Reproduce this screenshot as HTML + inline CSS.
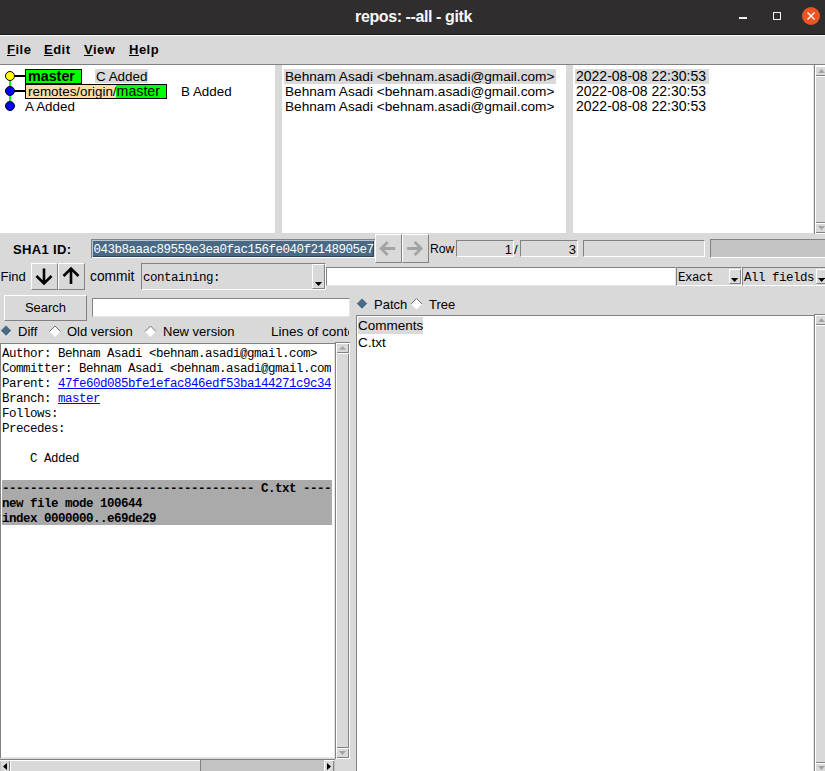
<!DOCTYPE html>
<html><head><meta charset="utf-8">
<style>
*{margin:0;padding:0;box-sizing:border-box}
html,body{width:825px;height:771px;overflow:hidden;background:#d9d9d9;position:relative}
body{font-family:"Liberation Sans",sans-serif;font-size:13px;color:#000}
.a{position:absolute}
.t{position:absolute;white-space:pre;line-height:15px;height:15px}
.m{font-family:"Liberation Mono",monospace;font-size:12.5px;letter-spacing:-0.5px}
.w{background:#fff}
.dk{background:#828282}
.wh{background:#fff}
.raised{position:absolute;background:#d9d9d9;border-top:1px solid #fff;border-left:1px solid #fff;border-bottom:1px solid #828282;border-right:1px solid #828282}
.sunk{position:absolute;border-top:1px solid #828282;border-left:1px solid #828282;border-bottom:1px solid #fff;border-right:1px solid #fff}
.hl{position:absolute;background:#d9d9d9}
.sunk.w{border-bottom-color:#e5e5e5;border-right-color:#e5e5e5}
svg{position:absolute;overflow:visible}
</style></head><body>

<!-- title bar -->
<div class="a" style="left:0;top:0;width:825px;height:34px;background:#2f2d2d"></div>
<div class="a" style="left:0;top:34px;width:825px;height:1px;background:#171515"></div>
<div class="a" style="left:0;top:35px;width:825px;height:1px;background:#fff"></div>
<div class="t" style="left:0;top:7px;width:825px;text-align:center;font-weight:bold;font-size:16px;letter-spacing:-0.4px;color:#f7f7f7;height:19px;line-height:19px;padding-left:2px">repos: --all - gitk</div>
<div class="a" style="left:739px;top:17px;width:8px;height:2px;background:#f2f2f2"></div>
<div class="a" style="left:773px;top:12px;width:8px;height:8px;border:1.5px solid #f2f2f2"></div>
<div class="a" style="left:802px;top:7px;width:18px;height:18px;border-radius:50%;background:#e95420"></div>
<svg style="left:0;top:0" width="825" height="34"><path d="M807.5 12.5 L814.5 19.5 M814.5 12.5 L807.5 19.5" stroke="#fff" stroke-width="1.3"/></svg>

<!-- menubar -->
<div class="t" style="left:7px;top:42px;font-weight:bold;font-size:13px;letter-spacing:0.5px;height:16px;line-height:16px"><u>F</u>ile</div>
<div class="t" style="left:44px;top:42px;font-weight:bold;font-size:13px;letter-spacing:0.5px;height:16px;line-height:16px"><u>E</u>dit</div>
<div class="t" style="left:84px;top:42px;font-weight:bold;font-size:13px;letter-spacing:0.5px;height:16px;line-height:16px"><u>V</u>iew</div>
<div class="t" style="left:129px;top:42px;font-weight:bold;font-size:13px;letter-spacing:0.5px;height:16px;line-height:16px"><u>H</u>elp</div>

<!-- top panes -->
<div class="a dk" style="left:0;top:64px;width:825px;height:1px"></div>
<div class="a w" style="left:0;top:65px;width:275px;height:168px"></div>
<div class="a w" style="left:282px;top:65px;width:284px;height:168px"></div>
<div class="a w" style="left:573px;top:65px;width:241px;height:168px"></div>

<!-- graph -->
<div class="a" style="left:9px;top:80px;width:2px;height:22px;background:#00ff00"></div>
<div class="a" style="left:15px;top:75px;width:10px;height:2px;background:#000"></div>
<div class="a" style="left:15px;top:90px;width:10px;height:2px;background:#000"></div>
<div class="a" style="left:5px;top:71px;width:10px;height:10px;border-radius:50%;border:1px solid #000;background:#ffff00"></div>
<div class="a" style="left:5px;top:86px;width:10px;height:10px;border-radius:50%;border:1px solid #000;background:#0000ff"></div>
<div class="a" style="left:5px;top:101px;width:10px;height:10px;border-radius:50%;border:1px solid #000;background:#0000ff"></div>
<div class="a" style="left:25px;top:69px;width:57px;height:15px;border:1px solid #000;background:#00ff00"></div>
<div class="t" style="left:28px;top:69px;font-weight:bold;font-size:14.3px">master</div>
<div class="hl" style="left:95px;top:69px;width:53px;height:14px"></div>
<div class="t" style="left:96px;top:69px;font-size:13.4px">C Added</div>
<div class="a" style="left:25px;top:84px;width:142px;height:15px;border:1px solid #000;background:linear-gradient(to right,#ffddaa 0,#ffddaa 90.4px,#00ff00 90.4px)"></div>
<div class="t" style="left:28px;top:84px;font-size:13.4px">remotes/origin/<span style="font-size:14.2px">master</span></div>
<div class="t" style="left:181px;top:84px;font-size:13.4px">B Added</div>
<div class="t" style="left:25px;top:99px;font-size:13.4px">A Added</div>

<!-- author -->
<div class="hl" style="left:284px;top:69px;width:272px;height:15px"></div>
<div class="t" style="left:285px;top:69px;font-size:13.65px">Behnam Asadi &lt;behnam.asadi@gmail.com&gt;</div>
<div class="t" style="left:285px;top:84px;font-size:13.65px">Behnam Asadi &lt;behnam.asadi@gmail.com&gt;</div>
<div class="t" style="left:285px;top:99px;font-size:13.65px">Behnam Asadi &lt;behnam.asadi@gmail.com&gt;</div>
<!-- date -->
<div class="hl" style="left:575px;top:69px;width:134px;height:15px"></div>
<div class="t" style="left:576px;top:69px;font-size:14px">2022-08-08 22:30:53</div>
<div class="t" style="left:576px;top:84px;font-size:14px">2022-08-08 22:30:53</div>
<div class="t" style="left:576px;top:99px;font-size:14px">2022-08-08 22:30:53</div>

<!-- top scrollbar -->
<div class="a" style="left:813px;top:65px;width:1px;height:168px;background:#e5e5e5"></div>
<div class="a dk" style="left:814px;top:64px;width:1px;height:170px"></div>
<div class="a wh" style="left:815px;top:65px;width:10px;height:169px"></div>
<div class="a" style="left:816px;top:67px;width:9px;height:8px;background:#d9d9d9"></div>
<div class="a dk" style="left:816px;top:75px;width:9px;height:1px"></div>
<div class="a" style="left:816px;top:77px;width:9px;height:145px;background:#d9d9d9"></div>
<div class="a dk" style="left:816px;top:222px;width:9px;height:1px"></div>
<div class="a" style="left:816px;top:224px;width:9px;height:8px;background:#d9d9d9"></div>
<div class="a dk" style="left:816px;top:232px;width:9px;height:1px"></div>
<svg style="left:0;top:0" width="825" height="240"><path d="M818 73 L821.5 69 L825 73 Z" fill="#a3a3a3"/><path d="M818 226 L821.5 230 L825 226 Z" fill="#a3a3a3"/></svg>


<!-- SHA row -->
<div class="t" style="left:13px;top:242px;font-weight:bold;font-size:13px;letter-spacing:0.35px">SHA1 ID:</div>
<div class="a dk" style="left:91px;top:239px;width:284px;height:1px"></div>
<div class="a dk" style="left:91px;top:239px;width:1px;height:19px"></div>
<div class="a" style="left:92px;top:240px;width:283px;height:1px;background:#b8c4d0"></div>
<div class="a" style="left:92px;top:240px;width:1px;height:17px;background:#b8c4d0"></div>
<div class="a" style="left:93px;top:241px;width:281px;height:16px;background:#4a6984"></div>
<div class="a" style="left:93px;top:256px;width:281px;height:1px;background:#2e4457"></div>
<div class="a wh" style="left:92px;top:257px;width:283px;height:1px"></div>
<div class="a" style="left:373px;top:241px;width:1px;height:16px;background:#2e4457"></div>
<div class="t m" style="left:93.5px;top:243px;color:#fff">043b8aaac89559e3ea0fac156fe040f2148905e7</div>
<div class="raised" style="left:375px;top:234px;width:27px;height:29px"></div>
<div class="raised" style="left:402px;top:234px;width:27px;height:29px"></div>
<svg style="left:0;top:0" width="825" height="300">
 <path d="M381.2 248.5 L395.2 248.5 M387.7 242 L381.2 248.5 L387.7 255" stroke="#a3a3a3" stroke-width="2.8" fill="none"/>
 <path d="M407.2 248.5 L421.2 248.5 M414.7 242 L421.2 248.5 L414.7 255" stroke="#a3a3a3" stroke-width="2.8" fill="none"/>
</svg>
<div class="t" style="left:430px;top:242px;font-size:12.2px">Row</div>
<div class="sunk" style="left:456px;top:240px;width:58px;height:17px"></div>
<div class="t" style="left:456px;top:242px;width:56px;text-align:right">1</div>
<div class="t" style="left:514px;top:242px">/</div>
<div class="sunk" style="left:520px;top:240px;width:58px;height:17px"></div>
<div class="t" style="left:520px;top:242px;width:56px;text-align:right">3</div>
<div class="sunk" style="left:583px;top:240px;width:122px;height:17px"></div>
<div class="sunk" style="left:710px;top:239px;width:120px;height:19px;background:#c3c3c3"></div>

<!-- Find row -->
<div class="t" style="left:0.5px;top:269px">Find</div>
<div class="raised" style="left:31px;top:263px;width:27px;height:27px"></div>
<div class="raised" style="left:58px;top:263px;width:27px;height:27px"></div>
<svg style="left:0;top:0" width="825" height="300">
 <path d="M44 268.5 L44 284 M36.5 276 L44 283.5 L51.5 276" stroke="#000" stroke-width="2.6" fill="none"/>
 <path d="M71 284 L71 268.5 M63.5 276 L71 268.5 L78.5 276" stroke="#000" stroke-width="2.6" fill="none"/>
</svg>
<div class="t" style="left:90px;top:269px;font-size:13.8px">commit</div>
<div class="sunk" style="left:141px;top:263px;width:185px;height:27px"></div>
<div class="t m" style="left:143px;top:271px">containing:</div>
<div class="raised" style="left:312px;top:264px;width:13px;height:25px"></div>
<svg style="left:0;top:0" width="825" height="300"><path d="M314.8 282 L322.2 282 L318.5 286 Z" fill="#000"/></svg>
<div class="sunk w" style="left:326px;top:267px;width:350px;height:19px"></div>
<div class="sunk" style="left:676px;top:267px;width:66px;height:19px"></div>
<div class="t m" style="left:678px;top:271px">Exact</div>
<div class="raised" style="left:729px;top:269px;width:12px;height:15px"></div>
<svg style="left:0;top:0" width="825" height="300"><path d="M731 278 L738.2 278 L734.6 282 Z" fill="#000"/></svg>
<div class="sunk" style="left:742px;top:267px;width:90px;height:19px"></div>
<div class="t m" style="left:744px;top:271px">All fields</div>
<div class="raised" style="left:816px;top:269px;width:12px;height:15px"></div>
<svg style="left:0;top:0" width="825" height="300"><path d="M818 278 L825.2 278 L821.6 282 Z" fill="#000"/></svg>

<!-- Search row -->
<div class="raised" style="left:4px;top:295px;width:83px;height:26px"></div>
<div class="t" style="left:4px;top:300px;width:83px;text-align:center">Search</div>
<div class="sunk w" style="left:92px;top:298px;width:258px;height:19px"></div>
<svg style="left:0;top:0" width="825" height="345"><path d="M356.5 304 L362 298.5 L367.5 304 L362 309.5 Z" fill="#4a6984"/><path d="M356.5 304 L362 309.5 L367.5 304" stroke="#fff" stroke-width="1" fill="none"/><path d="M411.0 304 L416.5 298.5 L422.0 304 L416.5 309.5 Z" fill="#fff"/><path d="M411.0 304 L416.5 298.5 L422.0 304" stroke="#707070" stroke-width="1" fill="none"/><path d="M0.5 331 L6 325.5 L11.5 331 L6 336.5 Z" fill="#4a6984"/><path d="M0.5 331 L6 336.5 L11.5 331" stroke="#fff" stroke-width="1" fill="none"/><path d="M49.5 331.5 L55 326.0 L60.5 331.5 L55 337.0 Z" fill="#fff"/><path d="M49.5 331.5 L55 326.0 L60.5 331.5" stroke="#707070" stroke-width="1" fill="none"/><path d="M145.0 331.5 L150.5 326.0 L156.0 331.5 L150.5 337.0 Z" fill="#fff"/><path d="M145.0 331.5 L150.5 326.0 L156.0 331.5" stroke="#707070" stroke-width="1" fill="none"/></svg>
<div class="t" style="left:374px;top:297px">Patch</div>
<div class="t" style="left:429px;top:297px">Tree</div>
<div class="t" style="left:18px;top:324px">Diff</div>
<div class="t" style="left:67px;top:324px">Old version</div>
<div class="t" style="left:163px;top:324px">New version</div>
<div class="a" style="left:271px;top:324px;width:78px;height:15px;overflow:hidden"><div class="t" style="left:0;top:0;font-size:13.5px">Lines of context</div></div>


<!-- left text pane -->
<div class="a dk" style="left:0;top:343px;width:335px;height:1px"></div>
<div class="a dk" style="left:0;top:343px;width:1px;height:415px"></div>
<div class="a w" style="left:1px;top:344px;width:334px;height:413px"></div>
<div class="a" style="left:2px;top:480px;width:330px;height:45px;background:#aaaaaa"></div>
<div class="a" style="left:2px;top:347px;width:329px;height:410px;overflow:hidden">
<div class="t m" style="left:0;top:0">Author: Behnam Asadi &lt;behnam.asadi@gmail.com&gt;</div>
<div class="t m" style="left:0;top:15px">Committer: Behnam Asadi &lt;behnam.asadi@gmail.com&gt;</div>
<div class="t m" style="left:0;top:30px">Parent: <span style="color:#0000ff;text-decoration:underline">47fe60d085bfe1efac846edf53ba144271c9c34c</span></div>
<div class="t m" style="left:0;top:45px">Branch: <span style="color:#0000ff;text-decoration:underline">master</span></div>
<div class="t m" style="left:0;top:60px">Follows:</div>
<div class="t m" style="left:0;top:75px">Precedes:</div>
<div class="t m" style="left:0;top:105px">    C Added</div>
<div class="t m" style="left:0;top:135px;font-weight:bold">------------------------------------ C.txt -----</div>
<div class="t m" style="left:0;top:150px;font-weight:bold">new file mode 100644</div>
<div class="t m" style="left:0;top:165px;font-weight:bold">index 0000000..e69de29</div>
</div>
<!-- left vscroll -->
<div class="a" style="left:334px;top:344px;width:1px;height:414px;background:#e5e5e5"></div>
<div class="a dk" style="left:335px;top:342px;width:15px;height:1px"></div>
<div class="a dk" style="left:335px;top:342px;width:1px;height:417px"></div>
<div class="a wh" style="left:336px;top:343px;width:14px;height:416px"></div>
<div class="a" style="left:337px;top:344px;width:12px;height:8px;background:#d9d9d9"></div>
<div class="a dk" style="left:337px;top:352px;width:12px;height:1px"></div>
<div class="a dk" style="left:348px;top:344px;width:1px;height:9px"></div>
<div class="a" style="left:337px;top:354px;width:11px;height:393px;background:#d9d9d9"></div>
<div class="a dk" style="left:337px;top:747px;width:12px;height:1px"></div>
<div class="a dk" style="left:348px;top:354px;width:1px;height:394px"></div>
<div class="a" style="left:337px;top:749px;width:11px;height:8px;background:#d9d9d9"></div>
<div class="a dk" style="left:337px;top:757px;width:12px;height:1px"></div>
<div class="a dk" style="left:348px;top:749px;width:1px;height:9px"></div>
<svg style="left:0;top:0" width="825" height="771">
 <path d="M339 349.7 L342.5 346 L346 349.7 Z" fill="#a3a3a3"/>
 <path d="M339 751 L342.5 755 L346 751 Z" fill="#a3a3a3"/>
</svg>
<!-- left hscroll -->
<div class="a" style="left:1px;top:757px;width:334px;height:1px;background:#e8e8e8"></div>
<div class="a" style="left:0;top:758px;width:335px;height:1px;background:#d9d9d9"></div>
<div class="a dk" style="left:0;top:759px;width:335px;height:1px"></div>
<div class="a" style="left:0;top:760px;width:335px;height:11px;background:#c3c3c3"></div>
<div class="a wh" style="left:0;top:760px;width:200px;height:1px"></div>
<div class="a" style="left:1px;top:761px;width:8px;height:10px;background:#d9d9d9"></div>
<div class="a dk" style="left:9px;top:761px;width:1px;height:10px"></div>
<div class="a wh" style="left:10px;top:761px;width:1px;height:10px"></div>
<div class="a" style="left:11px;top:761px;width:189px;height:10px;background:#d9d9d9"></div>
<div class="a dk" style="left:200px;top:760px;width:1px;height:11px"></div>
<div class="a wh" style="left:324px;top:760px;width:10px;height:1px"></div>
<div class="a wh" style="left:324px;top:760px;width:1px;height:11px"></div>
<div class="a" style="left:325px;top:761px;width:8px;height:10px;background:#d9d9d9"></div>
<div class="a dk" style="left:333px;top:761px;width:1px;height:10px"></div>
<svg style="left:0;top:0" width="825" height="771">
 <path d="M7 763 L3 766.5 L7 770 Z" fill="#000"/>
 <path d="M327 763 L331 766.5 L327 770 Z" fill="#000"/>
</svg>

<!-- right pane -->
<div class="a dk" style="left:356px;top:315px;width:459px;height:1px"></div>
<div class="a dk" style="left:356px;top:315px;width:1px;height:456px"></div>
<div class="a w" style="left:357px;top:316px;width:457px;height:455px"></div>
<div class="hl" style="left:358px;top:317px;width:65px;height:17px"></div>
<div class="t" style="left:358px;top:318px;font-size:13.5px">Comments</div>
<div class="t" style="left:358px;top:335px;font-size:13.5px">C.txt</div>
<!-- right scroll -->
<div class="a" style="left:813px;top:316px;width:1px;height:455px;background:#e5e5e5"></div>
<div class="a dk" style="left:814px;top:314px;width:11px;height:1px"></div>
<div class="a dk" style="left:814px;top:314px;width:1px;height:457px"></div>
<div class="a wh" style="left:815px;top:315px;width:10px;height:456px"></div>
<div class="a" style="left:816px;top:316px;width:9px;height:8px;background:#d9d9d9"></div>
<div class="a dk" style="left:816px;top:324px;width:9px;height:1px"></div>
<div class="a" style="left:816px;top:326px;width:9px;height:436px;background:#d9d9d9"></div>
<div class="a dk" style="left:816px;top:762px;width:9px;height:1px"></div>
<div class="a" style="left:816px;top:764px;width:9px;height:7px;background:#d9d9d9"></div>
<svg style="left:0;top:0" width="825" height="771">
 <path d="M818 322 L821.5 318 L825 322 Z" fill="#a3a3a3"/>
 <path d="M818 766 L821.5 770 L825 766 Z" fill="#a3a3a3"/>
</svg>

</body></html>
